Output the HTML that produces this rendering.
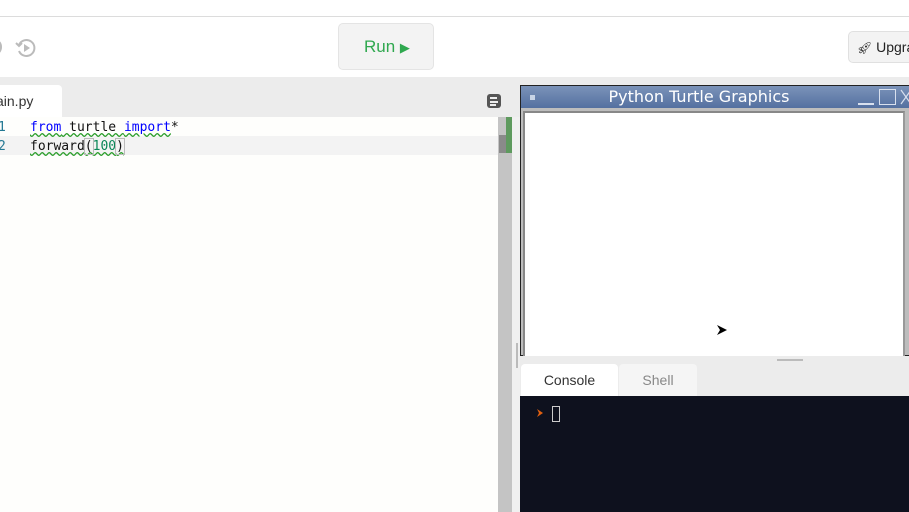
<!DOCTYPE html>
<html><head><style>
*{margin:0;padding:0;box-sizing:border-box}
body{width:909px;height:512px;overflow:hidden;background:#fff;font-family:"Liberation Sans",sans-serif;position:relative}
.a{position:absolute}
.mono{font-family:"DejaVu Sans Mono","Liberation Mono",monospace;font-size:13px}
</style></head><body>
<div class="a" style="left:0;top:16px;width:909px;height:1px;background:#dcdcdc"></div>
<div class="a" style="left:0;top:77px;width:909px;height:435px;background:#ececec"></div>
<svg class="a" style="left:14px;top:36px" width="24" height="24" viewBox="0 0 24 24"><path d="M5 9 A8 8 0 1 1 5 15" fill="none" stroke="#bbb" stroke-width="2"/><path d="M2 7 L5 10 L8 7" fill="none" stroke="#bbb" stroke-width="2"/><path d="M10 8 L16 12 L10 16Z" fill="#bbb"/></svg>
<div class="a" style="left:-8px;top:40px;width:10px;height:14px;border:2px solid #bbb;border-radius:50%"></div>
<div class="a" style="left:338px;top:23px;width:96px;height:47px;background:#f3f3f3;border:1px solid #e4e4e4;border-radius:5px;color:#2fa84f;font-size:17px;line-height:45px;padding-left:25px;white-space:nowrap">Run <span style="font-size:13px">▶</span></div>
<div class="a" style="left:848px;top:31px;width:90px;height:32px;background:#f3f3f3;border:1px solid #e0e0e0;border-radius:5px;font-size:14px;line-height:30px;padding-left:8px;color:#222;white-space:nowrap"><span style="font-size:12px">🚀︎</span> Upgrade</div>
<div class="a" style="left:0;top:85px;width:62px;height:32px;background:#fff;border-radius:0 4px 0 0;font-size:14px;line-height:32px;color:#333;text-indent:-4px">ain.py</div>
<div class="a" style="left:487px;top:94px;width:14px;height:14px;background:#555;border-radius:3px"><div style="margin:3px 3px 0;height:2px;width:7px;background:#eee"></div><div style="margin:2px 3px 0;height:2px;width:8px;background:#eee"></div><div style="margin:1px 3px 0;height:2px;width:6px;background:#eee"></div></div>
<div class="a" style="left:0;top:117px;width:498px;height:395px;background:#fefefc"></div>
<div class="a" style="left:0;top:136px;width:498px;height:19px;background:#f3f3f3"></div>
<div class="a mono" style="left:-2px;top:118px;line-height:19px;color:#237893">1<br>2</div>
<div class="a mono" style="left:30px;top:118px;line-height:19px;color:#111;white-space:pre"><span style="color:#0000ff;text-decoration:underline wavy #2a9d2a">from</span><span style="text-decoration:underline wavy #2a9d2a"> turtle </span><span style="color:#0000ff;text-decoration:underline wavy #2a9d2a">import</span>*<br><span style="text-decoration:underline wavy #2a9d2a">forward<span style="outline:1px solid #bbb">(</span><span style="color:#098658">100</span><span style="outline:1px solid #bbb">)</span></span></div>
<div class="a" style="left:498px;top:117px;width:14px;height:395px;background:#c4c4c4"></div>
<div class="a" style="left:499px;top:135px;width:7px;height:18px;background:#8a8a8a"></div>
<div class="a" style="left:506px;top:117px;width:6px;height:36px;background:#5e9a5e"></div>
<div class="a" style="left:512px;top:117px;width:8px;height:395px;background:#f0f0f0"></div>
<div class="a" style="left:516px;top:343px;width:2px;height:25px;background:#bbb"></div>
<div class="a" style="left:520px;top:85px;width:400px;height:271px;background:#bdbdbd;border:1px solid #222"></div>
<div class="a" style="left:521px;top:86px;width:400px;height:22px;background:linear-gradient(#7b93b9,#5470a0);color:#fff;font-family:'DejaVu Sans',sans-serif;font-size:16px;line-height:22px;text-align:center;padding-right:44px">Python Turtle Graphics</div>
<div class="a" style="left:530px;top:95px;width:5px;height:5px;background:#c8d4e6"></div>
<div class="a" style="left:858px;top:103px;width:16px;height:2px;background:#d8e0ee"></div>
<div class="a" style="left:879px;top:89px;width:17px;height:16px;border:1px solid #d8e0ee"></div>
<svg class="a" style="left:900px;top:89px" width="12" height="16"><path d="M1 1 L11 15 M11 1 L1 15" stroke="#d8e0ee" stroke-width="1.2"/></svg>
<div class="a" style="left:523px;top:111px;width:382px;height:245px;background:#fff;border-left:2px solid #888;border-top:2px solid #888;border-right:2px solid #999"></div>
<svg class="a" style="left:716px;top:324px" width="12" height="12" viewBox="0 0 12 12"><path d="M1 1 L11 6 L1 11 L4 6Z" fill="#000"/></svg>
<div class="a" style="left:520px;top:356px;width:389px;height:40px;background:#ececec"></div>
<div class="a" style="left:777px;top:359px;width:26px;height:2px;background:#bbb"></div>
<div class="a" style="left:521px;top:364px;width:97px;height:32px;background:#fff;border-radius:4px 4px 0 0;font-size:14px;line-height:32px;text-align:center;color:#333">Console</div>
<div class="a" style="left:619px;top:364px;width:78px;height:32px;background:#f5f5f5;border-radius:4px 4px 0 0;font-size:14px;line-height:32px;text-align:center;color:#888">Shell</div>
<div class="a" style="left:520px;top:396px;width:389px;height:116px;background:#0e111e"></div>
<svg class="a" style="left:537px;top:409px" width="6" height="8"><path d="M0 0 L6 4 L0 8 L2 4Z" fill="#e06010"/></svg>
<div class="a" style="left:552px;top:406px;width:8px;height:16px;border:1px solid #ccc"></div>
</body></html>
